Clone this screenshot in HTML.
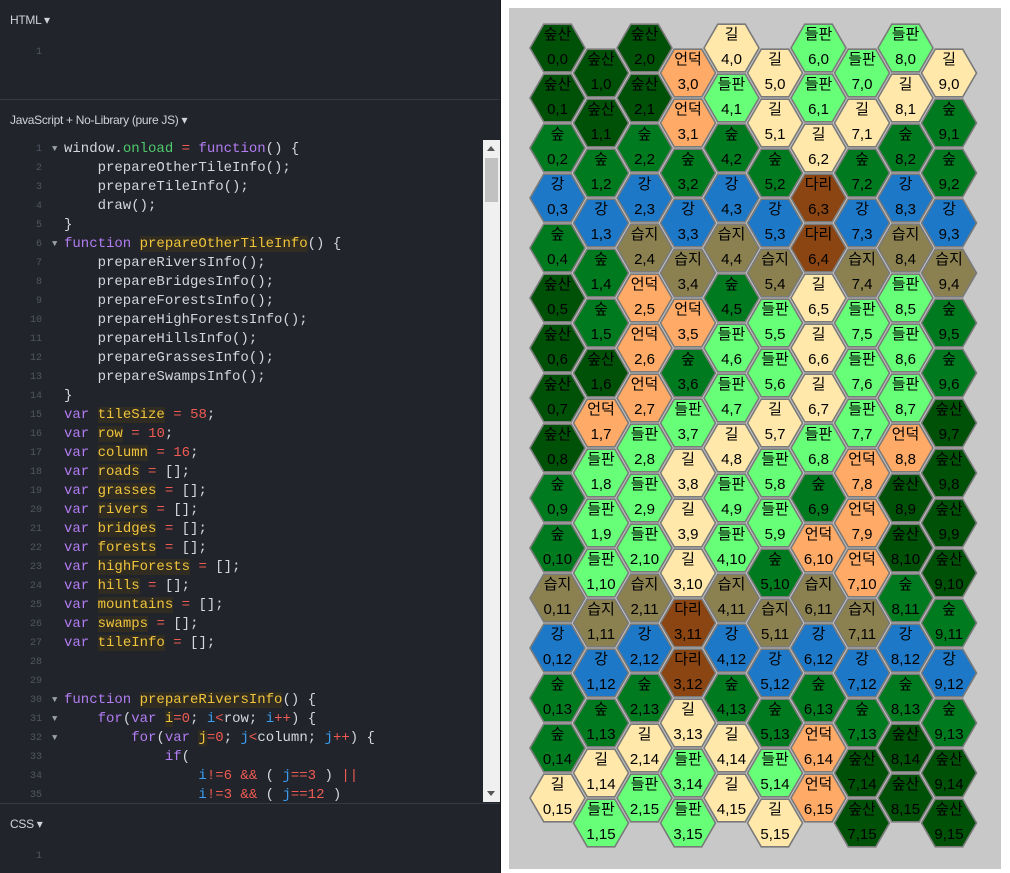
<!DOCTYPE html>
<html><head><meta charset="utf-8">
<style>
*{margin:0;padding:0;box-sizing:border-box}
body{width:1010px;height:873px;background:#fff;position:relative;overflow:hidden;font-family:"Liberation Sans","Noto Sans CJK KR",sans-serif}
#left{position:absolute;left:0;top:0;width:501px;height:873px;background:#21242b;border-right:1px solid #15171c}
.hdr{position:absolute;left:10px;font-size:12px;color:#d0d3d8;letter-spacing:-0.3px}
.div{position:absolute;left:0;width:500px;height:1px;background:#353942}
.gn{position:absolute;width:42px;text-align:right;font-family:"Liberation Mono",monospace;font-size:10px;color:#505660}
#code{position:absolute;left:0;top:140px;width:483px;height:663px;overflow:hidden}
.l{position:absolute;left:0;height:19px;line-height:19px;width:483px;white-space:pre;font-family:"Liberation Mono",monospace;font-size:14px;color:#d4d7dd}
.l .n{position:absolute;left:0;width:42px;text-align:right;font-size:10px;color:#505660}
.l .f{position:absolute;left:52px;font-size:9px;color:#9aa0a8}
.l .c{position:absolute;left:64px}
.k{color:#b27cf3}.y{color:#f0c43c;background:#302c22}.r{color:#ef5b52}.g{color:#4fca6c}.b{color:#3b9df2}
#sb{position:absolute;left:483px;top:140px;width:17px;height:662px;background:#f0f0f0}
#th{position:absolute;left:2px;top:18px;width:13px;height:44px;background:#c1c1c1}
#gray{position:absolute;left:509px;top:8px;width:492px;height:861px;background:#c8c8c8}
svg{position:absolute;left:0;top:0}
.a{fill:#005108}.bb{fill:#007a1e}.cc{fill:#1e78c8}.d{fill:#8b4513}.e{fill:#8b8050}.ff{fill:#ffaa66}.gg{fill:#ffe8aa}.h{fill:#66ff77}
use{stroke:#7a7a7a;stroke-width:1.6}
text{font-family:"Liberation Sans","Noto Sans CJK KR",sans-serif;font-size:15px;text-anchor:middle;fill:#000}
</style></head><body>
<div id="left">
<div class="hdr" style="top:13px">HTML ▾</div>
<div class="gn" style="top:47px">1</div>
<div class="div" style="top:99px"></div>
<div class="hdr" style="top:113px">JavaScript + No-Library (pure JS) ▾</div>
<div id="code">
<div class="l" style="top:0"><span class="n">1</span><span class="f">▼</span><span class="c">window.<span class="g">onload</span> <span class="r">=</span> <span class="k">function</span>() {</span></div>
<div class="l" style="top:19px"><span class="n">2</span><span class="c">    prepareOtherTileInfo();</span></div>
<div class="l" style="top:38px"><span class="n">3</span><span class="c">    prepareTileInfo();</span></div>
<div class="l" style="top:57px"><span class="n">4</span><span class="c">    draw();</span></div>
<div class="l" style="top:76px"><span class="n">5</span><span class="c">}</span></div>
<div class="l" style="top:95px"><span class="n">6</span><span class="f">▼</span><span class="c"><span class="k">function</span> <span class="y">prepareOtherTileInfo</span>() {</span></div>
<div class="l" style="top:114px"><span class="n">7</span><span class="c">    prepareRiversInfo();</span></div>
<div class="l" style="top:133px"><span class="n">8</span><span class="c">    prepareBridgesInfo();</span></div>
<div class="l" style="top:152px"><span class="n">9</span><span class="c">    prepareForestsInfo();</span></div>
<div class="l" style="top:171px"><span class="n">10</span><span class="c">    prepareHighForestsInfo();</span></div>
<div class="l" style="top:190px"><span class="n">11</span><span class="c">    prepareHillsInfo();</span></div>
<div class="l" style="top:209px"><span class="n">12</span><span class="c">    prepareGrassesInfo();</span></div>
<div class="l" style="top:228px"><span class="n">13</span><span class="c">    prepareSwampsInfo();</span></div>
<div class="l" style="top:247px"><span class="n">14</span><span class="c">}</span></div>
<div class="l" style="top:266px"><span class="n">15</span><span class="c"><span class="k">var</span> <span class="y">tileSize</span> <span class="r">=</span> <span class="r">58</span>;</span></div>
<div class="l" style="top:285px"><span class="n">16</span><span class="c"><span class="k">var</span> <span class="y">row</span> <span class="r">=</span> <span class="r">10</span>;</span></div>
<div class="l" style="top:304px"><span class="n">17</span><span class="c"><span class="k">var</span> <span class="y">column</span> <span class="r">=</span> <span class="r">16</span>;</span></div>
<div class="l" style="top:323px"><span class="n">18</span><span class="c"><span class="k">var</span> <span class="y">roads</span> <span class="r">=</span> [];</span></div>
<div class="l" style="top:342px"><span class="n">19</span><span class="c"><span class="k">var</span> <span class="y">grasses</span> <span class="r">=</span> [];</span></div>
<div class="l" style="top:361px"><span class="n">20</span><span class="c"><span class="k">var</span> <span class="y">rivers</span> <span class="r">=</span> [];</span></div>
<div class="l" style="top:380px"><span class="n">21</span><span class="c"><span class="k">var</span> <span class="y">bridges</span> <span class="r">=</span> [];</span></div>
<div class="l" style="top:399px"><span class="n">22</span><span class="c"><span class="k">var</span> <span class="y">forests</span> <span class="r">=</span> [];</span></div>
<div class="l" style="top:418px"><span class="n">23</span><span class="c"><span class="k">var</span> <span class="y">highForests</span> <span class="r">=</span> [];</span></div>
<div class="l" style="top:437px"><span class="n">24</span><span class="c"><span class="k">var</span> <span class="y">hills</span> <span class="r">=</span> [];</span></div>
<div class="l" style="top:456px"><span class="n">25</span><span class="c"><span class="k">var</span> <span class="y">mountains</span> <span class="r">=</span> [];</span></div>
<div class="l" style="top:475px"><span class="n">26</span><span class="c"><span class="k">var</span> <span class="y">swamps</span> <span class="r">=</span> [];</span></div>
<div class="l" style="top:494px"><span class="n">27</span><span class="c"><span class="k">var</span> <span class="y">tileInfo</span> <span class="r">=</span> [];</span></div>
<div class="l" style="top:513px"><span class="n">28</span></div>
<div class="l" style="top:532px"><span class="n">29</span></div>
<div class="l" style="top:551px"><span class="n">30</span><span class="f">▼</span><span class="c"><span class="k">function</span> <span class="y">prepareRiversInfo</span>() {</span></div>
<div class="l" style="top:570px"><span class="n">31</span><span class="f">▼</span><span class="c">    <span class="k">for</span>(<span class="k">var</span> <span class="y">i</span><span class="r">=0</span>; <span class="b">i</span><span class="r">&lt;</span>row; <span class="b">i</span><span class="r">++</span>) {</span></div>
<div class="l" style="top:589px"><span class="n">32</span><span class="f">▼</span><span class="c">        <span class="k">for</span>(<span class="k">var</span> <span class="y">j</span><span class="r">=0</span>; <span class="b">j</span><span class="r">&lt;</span>column; <span class="b">j</span><span class="r">++</span>) {</span></div>
<div class="l" style="top:608px"><span class="n">33</span><span class="c">            <span class="k">if</span>(</span></div>
<div class="l" style="top:627px"><span class="n">34</span><span class="c">                <span class="b">i</span><span class="r">!=6 &amp;&amp;</span> ( <span class="b">j</span><span class="r">==3</span> ) <span class="r">||</span></span></div>
<div class="l" style="top:646px"><span class="n">35</span><span class="c">                <span class="b">i</span><span class="r">!=3 &amp;&amp;</span> ( <span class="b">j</span><span class="r">==12</span> )</span></div>
</div>
<div id="sb"><div style="position:absolute;left:4px;top:6px;width:0;height:0;border-left:4.5px solid transparent;border-right:4.5px solid transparent;border-bottom:5px solid #555"></div><div id="th"></div><div style="position:absolute;left:4px;top:651px;width:0;height:0;border-left:4.5px solid transparent;border-right:4.5px solid transparent;border-top:5px solid #555"></div></div>
<div class="div" style="top:803px"></div>
<div class="hdr" style="top:817px">CSS ▾</div>
<div class="gn" style="top:851px">1</div>
</div>
<div id="gray"></div>
<svg width="1010" height="873" viewBox="0 0 1010 873">
<defs><polygon id="h" points="-27.5,0 -13.75,-23.8 13.75,-23.8 27.5,0 13.75,23.8 -13.75,23.8"/></defs>
<g transform="translate(557.5,48)">
<g transform="translate(0,0)"><use href="#h" class="a"/><text y="-9">숲산</text><text y="16">0,0</text></g>
<g transform="translate(0,50)"><use href="#h" class="a"/><text y="-9">숲산</text><text y="16">0,1</text></g>
<g transform="translate(0,100)"><use href="#h" class="bb"/><text y="-9">숲</text><text y="16">0,2</text></g>
<g transform="translate(0,150)"><use href="#h" class="cc"/><text y="-9">강</text><text y="16">0,3</text></g>
<g transform="translate(0,200)"><use href="#h" class="bb"/><text y="-9">숲</text><text y="16">0,4</text></g>
<g transform="translate(0,250)"><use href="#h" class="a"/><text y="-9">숲산</text><text y="16">0,5</text></g>
<g transform="translate(0,300)"><use href="#h" class="a"/><text y="-9">숲산</text><text y="16">0,6</text></g>
<g transform="translate(0,350)"><use href="#h" class="a"/><text y="-9">숲산</text><text y="16">0,7</text></g>
<g transform="translate(0,400)"><use href="#h" class="a"/><text y="-9">숲산</text><text y="16">0,8</text></g>
<g transform="translate(0,450)"><use href="#h" class="bb"/><text y="-9">숲</text><text y="16">0,9</text></g>
<g transform="translate(0,500)"><use href="#h" class="bb"/><text y="-9">숲</text><text y="16">0,10</text></g>
<g transform="translate(0,550)"><use href="#h" class="e"/><text y="-9">습지</text><text y="16">0,11</text></g>
<g transform="translate(0,600)"><use href="#h" class="cc"/><text y="-9">강</text><text y="16">0,12</text></g>
<g transform="translate(0,650)"><use href="#h" class="bb"/><text y="-9">숲</text><text y="16">0,13</text></g>
<g transform="translate(0,700)"><use href="#h" class="bb"/><text y="-9">숲</text><text y="16">0,14</text></g>
<g transform="translate(0,750)"><use href="#h" class="gg"/><text y="-9">길</text><text y="16">0,15</text></g>
</g>
<g transform="translate(601,73)">
<g transform="translate(0,0)"><use href="#h" class="a"/><text y="-9">숲산</text><text y="16">1,0</text></g>
<g transform="translate(0,50)"><use href="#h" class="a"/><text y="-9">숲산</text><text y="16">1,1</text></g>
<g transform="translate(0,100)"><use href="#h" class="bb"/><text y="-9">숲</text><text y="16">1,2</text></g>
<g transform="translate(0,150)"><use href="#h" class="cc"/><text y="-9">강</text><text y="16">1,3</text></g>
<g transform="translate(0,200)"><use href="#h" class="bb"/><text y="-9">숲</text><text y="16">1,4</text></g>
<g transform="translate(0,250)"><use href="#h" class="bb"/><text y="-9">숲</text><text y="16">1,5</text></g>
<g transform="translate(0,300)"><use href="#h" class="a"/><text y="-9">숲산</text><text y="16">1,6</text></g>
<g transform="translate(0,350)"><use href="#h" class="ff"/><text y="-9">언덕</text><text y="16">1,7</text></g>
<g transform="translate(0,400)"><use href="#h" class="h"/><text y="-9">들판</text><text y="16">1,8</text></g>
<g transform="translate(0,450)"><use href="#h" class="h"/><text y="-9">들판</text><text y="16">1,9</text></g>
<g transform="translate(0,500)"><use href="#h" class="h"/><text y="-9">들판</text><text y="16">1,10</text></g>
<g transform="translate(0,550)"><use href="#h" class="e"/><text y="-9">습지</text><text y="16">1,11</text></g>
<g transform="translate(0,600)"><use href="#h" class="cc"/><text y="-9">강</text><text y="16">1,12</text></g>
<g transform="translate(0,650)"><use href="#h" class="bb"/><text y="-9">숲</text><text y="16">1,13</text></g>
<g transform="translate(0,700)"><use href="#h" class="gg"/><text y="-9">길</text><text y="16">1,14</text></g>
<g transform="translate(0,750)"><use href="#h" class="h"/><text y="-9">들판</text><text y="16">1,15</text></g>
</g>
<g transform="translate(644.5,48)">
<g transform="translate(0,0)"><use href="#h" class="a"/><text y="-9">숲산</text><text y="16">2,0</text></g>
<g transform="translate(0,50)"><use href="#h" class="a"/><text y="-9">숲산</text><text y="16">2,1</text></g>
<g transform="translate(0,100)"><use href="#h" class="bb"/><text y="-9">숲</text><text y="16">2,2</text></g>
<g transform="translate(0,150)"><use href="#h" class="cc"/><text y="-9">강</text><text y="16">2,3</text></g>
<g transform="translate(0,200)"><use href="#h" class="e"/><text y="-9">습지</text><text y="16">2,4</text></g>
<g transform="translate(0,250)"><use href="#h" class="ff"/><text y="-9">언덕</text><text y="16">2,5</text></g>
<g transform="translate(0,300)"><use href="#h" class="ff"/><text y="-9">언덕</text><text y="16">2,6</text></g>
<g transform="translate(0,350)"><use href="#h" class="ff"/><text y="-9">언덕</text><text y="16">2,7</text></g>
<g transform="translate(0,400)"><use href="#h" class="h"/><text y="-9">들판</text><text y="16">2,8</text></g>
<g transform="translate(0,450)"><use href="#h" class="h"/><text y="-9">들판</text><text y="16">2,9</text></g>
<g transform="translate(0,500)"><use href="#h" class="h"/><text y="-9">들판</text><text y="16">2,10</text></g>
<g transform="translate(0,550)"><use href="#h" class="e"/><text y="-9">습지</text><text y="16">2,11</text></g>
<g transform="translate(0,600)"><use href="#h" class="cc"/><text y="-9">강</text><text y="16">2,12</text></g>
<g transform="translate(0,650)"><use href="#h" class="bb"/><text y="-9">숲</text><text y="16">2,13</text></g>
<g transform="translate(0,700)"><use href="#h" class="gg"/><text y="-9">길</text><text y="16">2,14</text></g>
<g transform="translate(0,750)"><use href="#h" class="h"/><text y="-9">들판</text><text y="16">2,15</text></g>
</g>
<g transform="translate(688,73)">
<g transform="translate(0,0)"><use href="#h" class="ff"/><text y="-9">언덕</text><text y="16">3,0</text></g>
<g transform="translate(0,50)"><use href="#h" class="ff"/><text y="-9">언덕</text><text y="16">3,1</text></g>
<g transform="translate(0,100)"><use href="#h" class="bb"/><text y="-9">숲</text><text y="16">3,2</text></g>
<g transform="translate(0,150)"><use href="#h" class="cc"/><text y="-9">강</text><text y="16">3,3</text></g>
<g transform="translate(0,200)"><use href="#h" class="e"/><text y="-9">습지</text><text y="16">3,4</text></g>
<g transform="translate(0,250)"><use href="#h" class="ff"/><text y="-9">언덕</text><text y="16">3,5</text></g>
<g transform="translate(0,300)"><use href="#h" class="bb"/><text y="-9">숲</text><text y="16">3,6</text></g>
<g transform="translate(0,350)"><use href="#h" class="h"/><text y="-9">들판</text><text y="16">3,7</text></g>
<g transform="translate(0,400)"><use href="#h" class="gg"/><text y="-9">길</text><text y="16">3,8</text></g>
<g transform="translate(0,450)"><use href="#h" class="gg"/><text y="-9">길</text><text y="16">3,9</text></g>
<g transform="translate(0,500)"><use href="#h" class="gg"/><text y="-9">길</text><text y="16">3,10</text></g>
<g transform="translate(0,550)"><use href="#h" class="d"/><text y="-9">다리</text><text y="16">3,11</text></g>
<g transform="translate(0,600)"><use href="#h" class="d"/><text y="-9">다리</text><text y="16">3,12</text></g>
<g transform="translate(0,650)"><use href="#h" class="gg"/><text y="-9">길</text><text y="16">3,13</text></g>
<g transform="translate(0,700)"><use href="#h" class="h"/><text y="-9">들판</text><text y="16">3,14</text></g>
<g transform="translate(0,750)"><use href="#h" class="h"/><text y="-9">들판</text><text y="16">3,15</text></g>
</g>
<g transform="translate(731.5,48)">
<g transform="translate(0,0)"><use href="#h" class="gg"/><text y="-9">길</text><text y="16">4,0</text></g>
<g transform="translate(0,50)"><use href="#h" class="h"/><text y="-9">들판</text><text y="16">4,1</text></g>
<g transform="translate(0,100)"><use href="#h" class="bb"/><text y="-9">숲</text><text y="16">4,2</text></g>
<g transform="translate(0,150)"><use href="#h" class="cc"/><text y="-9">강</text><text y="16">4,3</text></g>
<g transform="translate(0,200)"><use href="#h" class="e"/><text y="-9">습지</text><text y="16">4,4</text></g>
<g transform="translate(0,250)"><use href="#h" class="bb"/><text y="-9">숲</text><text y="16">4,5</text></g>
<g transform="translate(0,300)"><use href="#h" class="h"/><text y="-9">들판</text><text y="16">4,6</text></g>
<g transform="translate(0,350)"><use href="#h" class="h"/><text y="-9">들판</text><text y="16">4,7</text></g>
<g transform="translate(0,400)"><use href="#h" class="gg"/><text y="-9">길</text><text y="16">4,8</text></g>
<g transform="translate(0,450)"><use href="#h" class="h"/><text y="-9">들판</text><text y="16">4,9</text></g>
<g transform="translate(0,500)"><use href="#h" class="h"/><text y="-9">들판</text><text y="16">4,10</text></g>
<g transform="translate(0,550)"><use href="#h" class="e"/><text y="-9">습지</text><text y="16">4,11</text></g>
<g transform="translate(0,600)"><use href="#h" class="cc"/><text y="-9">강</text><text y="16">4,12</text></g>
<g transform="translate(0,650)"><use href="#h" class="bb"/><text y="-9">숲</text><text y="16">4,13</text></g>
<g transform="translate(0,700)"><use href="#h" class="gg"/><text y="-9">길</text><text y="16">4,14</text></g>
<g transform="translate(0,750)"><use href="#h" class="gg"/><text y="-9">길</text><text y="16">4,15</text></g>
</g>
<g transform="translate(775,73)">
<g transform="translate(0,0)"><use href="#h" class="gg"/><text y="-9">길</text><text y="16">5,0</text></g>
<g transform="translate(0,50)"><use href="#h" class="gg"/><text y="-9">길</text><text y="16">5,1</text></g>
<g transform="translate(0,100)"><use href="#h" class="bb"/><text y="-9">숲</text><text y="16">5,2</text></g>
<g transform="translate(0,150)"><use href="#h" class="cc"/><text y="-9">강</text><text y="16">5,3</text></g>
<g transform="translate(0,200)"><use href="#h" class="e"/><text y="-9">습지</text><text y="16">5,4</text></g>
<g transform="translate(0,250)"><use href="#h" class="h"/><text y="-9">들판</text><text y="16">5,5</text></g>
<g transform="translate(0,300)"><use href="#h" class="h"/><text y="-9">들판</text><text y="16">5,6</text></g>
<g transform="translate(0,350)"><use href="#h" class="gg"/><text y="-9">길</text><text y="16">5,7</text></g>
<g transform="translate(0,400)"><use href="#h" class="h"/><text y="-9">들판</text><text y="16">5,8</text></g>
<g transform="translate(0,450)"><use href="#h" class="h"/><text y="-9">들판</text><text y="16">5,9</text></g>
<g transform="translate(0,500)"><use href="#h" class="bb"/><text y="-9">숲</text><text y="16">5,10</text></g>
<g transform="translate(0,550)"><use href="#h" class="e"/><text y="-9">습지</text><text y="16">5,11</text></g>
<g transform="translate(0,600)"><use href="#h" class="cc"/><text y="-9">강</text><text y="16">5,12</text></g>
<g transform="translate(0,650)"><use href="#h" class="bb"/><text y="-9">숲</text><text y="16">5,13</text></g>
<g transform="translate(0,700)"><use href="#h" class="h"/><text y="-9">들판</text><text y="16">5,14</text></g>
<g transform="translate(0,750)"><use href="#h" class="gg"/><text y="-9">길</text><text y="16">5,15</text></g>
</g>
<g transform="translate(818.5,48)">
<g transform="translate(0,0)"><use href="#h" class="h"/><text y="-9">들판</text><text y="16">6,0</text></g>
<g transform="translate(0,50)"><use href="#h" class="h"/><text y="-9">들판</text><text y="16">6,1</text></g>
<g transform="translate(0,100)"><use href="#h" class="gg"/><text y="-9">길</text><text y="16">6,2</text></g>
<g transform="translate(0,150)"><use href="#h" class="d"/><text y="-9">다리</text><text y="16">6,3</text></g>
<g transform="translate(0,200)"><use href="#h" class="d"/><text y="-9">다리</text><text y="16">6,4</text></g>
<g transform="translate(0,250)"><use href="#h" class="gg"/><text y="-9">길</text><text y="16">6,5</text></g>
<g transform="translate(0,300)"><use href="#h" class="gg"/><text y="-9">길</text><text y="16">6,6</text></g>
<g transform="translate(0,350)"><use href="#h" class="gg"/><text y="-9">길</text><text y="16">6,7</text></g>
<g transform="translate(0,400)"><use href="#h" class="h"/><text y="-9">들판</text><text y="16">6,8</text></g>
<g transform="translate(0,450)"><use href="#h" class="bb"/><text y="-9">숲</text><text y="16">6,9</text></g>
<g transform="translate(0,500)"><use href="#h" class="ff"/><text y="-9">언덕</text><text y="16">6,10</text></g>
<g transform="translate(0,550)"><use href="#h" class="e"/><text y="-9">습지</text><text y="16">6,11</text></g>
<g transform="translate(0,600)"><use href="#h" class="cc"/><text y="-9">강</text><text y="16">6,12</text></g>
<g transform="translate(0,650)"><use href="#h" class="bb"/><text y="-9">숲</text><text y="16">6,13</text></g>
<g transform="translate(0,700)"><use href="#h" class="ff"/><text y="-9">언덕</text><text y="16">6,14</text></g>
<g transform="translate(0,750)"><use href="#h" class="ff"/><text y="-9">언덕</text><text y="16">6,15</text></g>
</g>
<g transform="translate(862,73)">
<g transform="translate(0,0)"><use href="#h" class="h"/><text y="-9">들판</text><text y="16">7,0</text></g>
<g transform="translate(0,50)"><use href="#h" class="gg"/><text y="-9">길</text><text y="16">7,1</text></g>
<g transform="translate(0,100)"><use href="#h" class="bb"/><text y="-9">숲</text><text y="16">7,2</text></g>
<g transform="translate(0,150)"><use href="#h" class="cc"/><text y="-9">강</text><text y="16">7,3</text></g>
<g transform="translate(0,200)"><use href="#h" class="e"/><text y="-9">습지</text><text y="16">7,4</text></g>
<g transform="translate(0,250)"><use href="#h" class="h"/><text y="-9">들판</text><text y="16">7,5</text></g>
<g transform="translate(0,300)"><use href="#h" class="h"/><text y="-9">들판</text><text y="16">7,6</text></g>
<g transform="translate(0,350)"><use href="#h" class="h"/><text y="-9">들판</text><text y="16">7,7</text></g>
<g transform="translate(0,400)"><use href="#h" class="ff"/><text y="-9">언덕</text><text y="16">7,8</text></g>
<g transform="translate(0,450)"><use href="#h" class="ff"/><text y="-9">언덕</text><text y="16">7,9</text></g>
<g transform="translate(0,500)"><use href="#h" class="ff"/><text y="-9">언덕</text><text y="16">7,10</text></g>
<g transform="translate(0,550)"><use href="#h" class="e"/><text y="-9">습지</text><text y="16">7,11</text></g>
<g transform="translate(0,600)"><use href="#h" class="cc"/><text y="-9">강</text><text y="16">7,12</text></g>
<g transform="translate(0,650)"><use href="#h" class="bb"/><text y="-9">숲</text><text y="16">7,13</text></g>
<g transform="translate(0,700)"><use href="#h" class="a"/><text y="-9">숲산</text><text y="16">7,14</text></g>
<g transform="translate(0,750)"><use href="#h" class="a"/><text y="-9">숲산</text><text y="16">7,15</text></g>
</g>
<g transform="translate(905.5,48)">
<g transform="translate(0,0)"><use href="#h" class="h"/><text y="-9">들판</text><text y="16">8,0</text></g>
<g transform="translate(0,50)"><use href="#h" class="gg"/><text y="-9">길</text><text y="16">8,1</text></g>
<g transform="translate(0,100)"><use href="#h" class="bb"/><text y="-9">숲</text><text y="16">8,2</text></g>
<g transform="translate(0,150)"><use href="#h" class="cc"/><text y="-9">강</text><text y="16">8,3</text></g>
<g transform="translate(0,200)"><use href="#h" class="e"/><text y="-9">습지</text><text y="16">8,4</text></g>
<g transform="translate(0,250)"><use href="#h" class="h"/><text y="-9">들판</text><text y="16">8,5</text></g>
<g transform="translate(0,300)"><use href="#h" class="h"/><text y="-9">들판</text><text y="16">8,6</text></g>
<g transform="translate(0,350)"><use href="#h" class="h"/><text y="-9">들판</text><text y="16">8,7</text></g>
<g transform="translate(0,400)"><use href="#h" class="ff"/><text y="-9">언덕</text><text y="16">8,8</text></g>
<g transform="translate(0,450)"><use href="#h" class="a"/><text y="-9">숲산</text><text y="16">8,9</text></g>
<g transform="translate(0,500)"><use href="#h" class="a"/><text y="-9">숲산</text><text y="16">8,10</text></g>
<g transform="translate(0,550)"><use href="#h" class="bb"/><text y="-9">숲</text><text y="16">8,11</text></g>
<g transform="translate(0,600)"><use href="#h" class="cc"/><text y="-9">강</text><text y="16">8,12</text></g>
<g transform="translate(0,650)"><use href="#h" class="bb"/><text y="-9">숲</text><text y="16">8,13</text></g>
<g transform="translate(0,700)"><use href="#h" class="a"/><text y="-9">숲산</text><text y="16">8,14</text></g>
<g transform="translate(0,750)"><use href="#h" class="a"/><text y="-9">숲산</text><text y="16">8,15</text></g>
</g>
<g transform="translate(949,73)">
<g transform="translate(0,0)"><use href="#h" class="gg"/><text y="-9">길</text><text y="16">9,0</text></g>
<g transform="translate(0,50)"><use href="#h" class="bb"/><text y="-9">숲</text><text y="16">9,1</text></g>
<g transform="translate(0,100)"><use href="#h" class="bb"/><text y="-9">숲</text><text y="16">9,2</text></g>
<g transform="translate(0,150)"><use href="#h" class="cc"/><text y="-9">강</text><text y="16">9,3</text></g>
<g transform="translate(0,200)"><use href="#h" class="e"/><text y="-9">습지</text><text y="16">9,4</text></g>
<g transform="translate(0,250)"><use href="#h" class="bb"/><text y="-9">숲</text><text y="16">9,5</text></g>
<g transform="translate(0,300)"><use href="#h" class="bb"/><text y="-9">숲</text><text y="16">9,6</text></g>
<g transform="translate(0,350)"><use href="#h" class="a"/><text y="-9">숲산</text><text y="16">9,7</text></g>
<g transform="translate(0,400)"><use href="#h" class="a"/><text y="-9">숲산</text><text y="16">9,8</text></g>
<g transform="translate(0,450)"><use href="#h" class="a"/><text y="-9">숲산</text><text y="16">9,9</text></g>
<g transform="translate(0,500)"><use href="#h" class="a"/><text y="-9">숲산</text><text y="16">9,10</text></g>
<g transform="translate(0,550)"><use href="#h" class="bb"/><text y="-9">숲</text><text y="16">9,11</text></g>
<g transform="translate(0,600)"><use href="#h" class="cc"/><text y="-9">강</text><text y="16">9,12</text></g>
<g transform="translate(0,650)"><use href="#h" class="bb"/><text y="-9">숲</text><text y="16">9,13</text></g>
<g transform="translate(0,700)"><use href="#h" class="a"/><text y="-9">숲산</text><text y="16">9,14</text></g>
<g transform="translate(0,750)"><use href="#h" class="a"/><text y="-9">숲산</text><text y="16">9,15</text></g>
</g>
</svg>
</body></html>
